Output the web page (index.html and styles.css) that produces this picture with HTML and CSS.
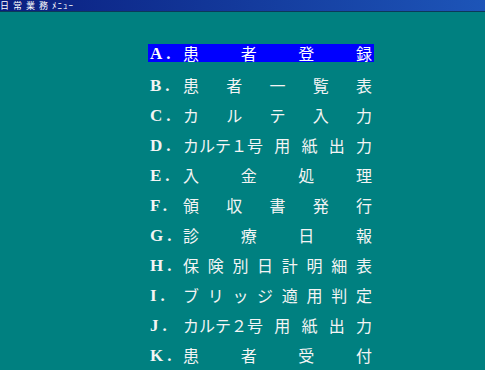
FILE: index.html
```html
<!DOCTYPE html>
<html lang="ja">
<head>
    <meta charset="UTF-8">
    <title>日常業務メニュー</title>
    <link rel="stylesheet" href="styles.css">
</head>
<body>
    <div class="titlebar"><span class="kanji">日常業務</span><span class="kana">ﾒﾆｭｰ</span></div>
    <div class="menu">
        <div class="item active"><span class="key">A.</span><span class="words"><span>患</span><span>者</span><span>登</span><span>録</span></span></div>
        <div class="item"><span class="key">B.</span><span class="words"><span>患</span><span>者</span><span>一</span><span>覧</span><span>表</span></span></div>
        <div class="item"><span class="key">C.</span><span class="words"><span>カ</span><span>ル</span><span>テ</span><span>入</span><span>力</span></span></div>
        <div class="item"><span class="key">D.</span><span class="words"><span>カルテ１号</span><span>用</span><span>紙</span><span>出</span><span>力</span></span></div>
        <div class="item"><span class="key">E.</span><span class="words"><span>入</span><span>金</span><span>処</span><span>理</span></span></div>
        <div class="item"><span class="key">F.</span><span class="words"><span>領</span><span>収</span><span>書</span><span>発</span><span>行</span></span></div>
        <div class="item"><span class="key">G.</span><span class="words"><span>診</span><span>療</span><span>日</span><span>報</span></span></div>
        <div class="item"><span class="key">H.</span><span class="words"><span>保</span><span>険</span><span>別</span><span>日</span><span>計</span><span>明</span><span>細</span><span>表</span></span></div>
        <div class="item"><span class="key">I.</span><span class="words"><span>ブ</span><span>リ</span><span>ッ</span><span>ジ</span><span>適</span><span>用</span><span>判</span><span>定</span></span></div>
        <div class="item"><span class="key">J.</span><span class="words"><span>カルテ２号</span><span>用</span><span>紙</span><span>出</span><span>力</span></span></div>
        <div class="item"><span class="key">K.</span><span class="words"><span>患</span><span>者</span><span>受</span><span>付</span></span></div>
    </div>
</body>
</html>
```

FILE: styles.css
```css
body {
    margin: 0;
    width: 485px;
    height: 370px;
    overflow: hidden;
    background-color: #008080;
    font-family: "Noto Sans CJK JP", sans-serif;
}
.titlebar {
    height: 11px;
    line-height: 11px;
    background: linear-gradient(to right, #0a1f80, #1d55b8);
    border-bottom: 1px solid #0b3a58;
    color: #fff;
    font-size: 9px;
    white-space: nowrap;
}
.titlebar .kanji {
    letter-spacing: 4px;
}
.titlebar .kana {
    letter-spacing: 1px;
}
.menu {
    margin: 32px 0 0 148px;
    width: 226px;
    display: flex;
    flex-direction: column;
    gap: 12px;
}
.item {
    display: flex;
    height: 18px;
    line-height: 18px;
    padding: 0 2px;
    color: #f4f4f4;
    font-size: 16px;
}
.item.active {
    background-color: #0000ff;
    color: #fff;
    margin-bottom: 2px;
}
.key {
    width: 33px;
    font-family: "Liberation Serif", serif;
    font-size: 17px;
    font-weight: bold;
    letter-spacing: 4px;
    line-height: 20px;
}
.words {
    flex: 1;
    display: flex;
    justify-content: space-between;
}
```
